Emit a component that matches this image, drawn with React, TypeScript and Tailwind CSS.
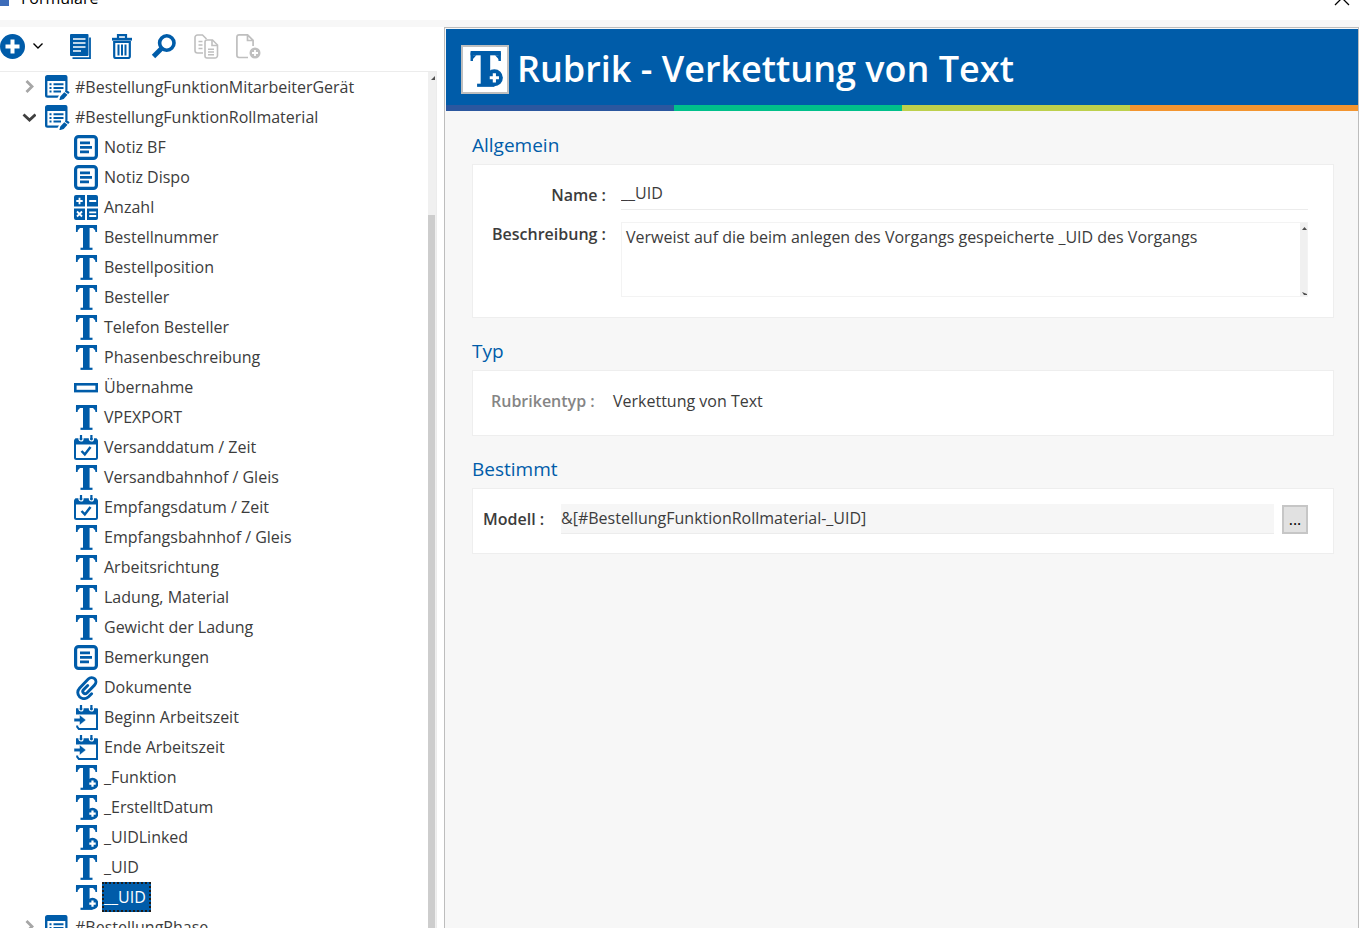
import React, { useState } from 'react';
import clsx from 'clsx';

type IconType = 'note' | 'calc' | 'text' | 'concat' | 'separator' | 'date' | 'file' | 'time';

interface Field {
  name: string;
  icon: IconType;
}

const fields: Field[] = [
  { name: 'Notiz BF', icon: 'note' },
  { name: 'Notiz Dispo', icon: 'note' },
  { name: 'Anzahl', icon: 'calc' },
  { name: 'Bestellnummer', icon: 'text' },
  { name: 'Bestellposition', icon: 'text' },
  { name: 'Besteller', icon: 'text' },
  { name: 'Telefon Besteller', icon: 'text' },
  { name: 'Phasenbeschreibung', icon: 'text' },
  { name: 'Übernahme', icon: 'separator' },
  { name: 'VPEXPORT', icon: 'text' },
  { name: 'Versanddatum / Zeit', icon: 'date' },
  { name: 'Versandbahnhof / Gleis', icon: 'text' },
  { name: 'Empfangsdatum / Zeit', icon: 'date' },
  { name: 'Empfangsbahnhof / Gleis', icon: 'text' },
  { name: 'Arbeitsrichtung', icon: 'text' },
  { name: 'Ladung, Material', icon: 'text' },
  { name: 'Gewicht der Ladung', icon: 'text' },
  { name: 'Bemerkungen', icon: 'note' },
  { name: 'Dokumente', icon: 'file' },
  { name: 'Beginn Arbeitszeit', icon: 'time' },
  { name: 'Ende Arbeitszeit', icon: 'time' },
  { name: '_Funktion', icon: 'concat' },
  { name: '_ErstelltDatum', icon: 'concat' },
  { name: '_UIDLinked', icon: 'concat' },
  { name: '_UID', icon: 'text' },
  { name: '__UID', icon: 'concat' },
];

const TextIcon = ({ plus = false, className = 'h-[25px] w-6' }: { plus?: boolean; className?: string }) => (
  <svg viewBox="0 0 24 25" fill="none" stroke="currentColor" className={className}>
    <path d="M2 1.5h21" strokeWidth="3" />
    <path d="M2.8 1v6M22.2 1v6" strokeWidth="1.7" />
    <path d="M3 3l3 0L3.200 6zM22 3l-3 0L21.800 6z" fill="currentColor" stroke="none" />
    <path d="M12.300 1v23" strokeWidth="6.600" />
    <path d="M6.500 23.800h12" strokeWidth="2.200" />
    {plus && (
      <>
        <circle cx="18.500" cy="18.600" r="5.900" fill="currentColor" stroke="none" />
        <path d="M18.500 15.400v6.400M15.300 18.600h6.400" stroke="white" strokeWidth="2.200" />
      </>
    )}
  </svg>
);

const CalendarTop = () => (
  <>
    <path d="M1 3.500h22v6H1z" fill="currentColor" />
    <path d="M5 0v4a2 2 0 0 0 4 0V0M15.400 0v4a2 2 0 0 0 4 0V0" stroke="white" strokeWidth="1.200" />
    <path d="M7 0v4.500M17.400 0v4.500" stroke="currentColor" strokeWidth="2.200" />
  </>
);

const FieldIcon = ({ type }: { type: IconType }) => {
  if (type === 'text') return <TextIcon />;
  if (type === 'concat') return <TextIcon plus />;
  return (
    <svg viewBox="0 0 24 25" fill="none" className="h-[25px] w-6">
      {type === 'note' && (
        <g stroke="currentColor">
          <rect x="1.600" y="1.600" width="20.800" height="21.800" rx="3" strokeWidth="3.200" />
          <path d="M6 7.900h10M6 12.400h12M6 16.900h9" strokeWidth="2.600" />
        </g>
      )}
      {type === 'calc' && (
        <>
          <path d="M2 0h9v11.500H0V2a2 2 0 0 1 2-2zM13 0h9a2 2 0 0 1 2 2v9.500H13zM0 13.500h11V25H2a2 2 0 0 1-2-2zM13 13.500h11V23a2 2 0 0 1-2 2h-9z" fill="currentColor" />
          <path d="M5.500 2.800v6.400M2.300 6h6.400M15.200 6h7M3 16.500l5 5M8 16.500l-5 5M15.200 17.300h7M15.200 21h7" stroke="white" strokeWidth="1.800" />
        </>
      )}
      {type === 'separator' && (
        <rect x="1.300" y="9.300" width="21.400" height="6.800" stroke="currentColor" strokeWidth="2.600" />
      )}
      {type === 'date' && (
        <>
          <rect x="1" y="4.500" width="22" height="19.400" rx="1.500" stroke="currentColor" strokeWidth="2" />
          <CalendarTop />
          <path d="M7.500 16l3.300 3.400 5.700-7.400" stroke="currentColor" strokeWidth="2.500" />
        </>
      )}
      {type === 'time' && (
        <>
          <path d="M3 9V4.500h20v19.400H4.800L3.200 22v-1.500" stroke="currentColor" strokeWidth="2" />
          <path d="M2 3.500h21v6H2z" fill="currentColor" />
          <path d="M5 0v4a2 2 0 0 0 4 0V0M15.400 0v4a2 2 0 0 0 4 0V0" stroke="white" strokeWidth="1.200" />
          <path d="M7 0v4.500M17.400 0v4.500" stroke="currentColor" strokeWidth="2.200" />
          <path d="M0 13.300h5.500V9.800l6.500 5.200-6.500 5.200v-3.500H0z" fill="currentColor" stroke="white" strokeWidth="0.500" />
        </>
      )}
      {type === 'file' && (
        <path
          d="M17.600 18.800l-3 2.900c-2.600 2.400-6.300 2.600-8.900.3-2.600-2.500-2.600-6.400 0-9.100l8.600-8.900c1.800-1.800 4.700-1.900 6.400-.2 1.700 1.800 1.600 4.500-.2 6.300l-7.600 7.800c-1 1-2.500 1-3.400.1-.9-.9-.9-2.300 0-3.300l4.200-4.200"
          stroke="currentColor"
          strokeWidth="2.900"
          strokeLinecap="round"
        />
      )}
    </svg>
  );
};

const FormIcon = () => (
  <svg viewBox="0 0 25 25" fill="none" className="h-[25px] w-[25px] text-[#005ca9]">
    <path d="M2.500 0h18a2 2 0 0 1 2 2v13l-2.200 2V6H2.400v14.500H14l-1.500 2.200H2.500A2.500 2.500 0 0 1 0 20.200V2.500A2.500 2.500 0 0 1 2.500 0z" fill="currentColor" />
    <path d="M8.500 9.300h10M8.500 12.900h10M8.500 16.500h7.500M4.500 9.300h2M4.500 12.900h2M4.500 16.500h2" stroke="currentColor" strokeWidth="2" />
    <path d="M21.300 14.800l3.400 2.400-1.500 1.900-3.200-2.400zM19.300 17.300l3.200 2.400-3.800 4.400-4.400 1.200 1-3.900z" fill="currentColor" />
  </svg>
);

const Chevron = ({ open }: { open?: boolean }) => (
  <svg viewBox="0 0 14 14" fill="none" className={clsx('h-3.5 w-3.5', open ? 'text-[#404040]' : 'text-[#a6a6a6]')}>
    <path d={open ? 'M1.500 4.500L7.500 10l6-5.500' : 'M4.500 1l5.500 5.500L4.500 12'} stroke="currentColor" strokeWidth="2.800" />
  </svg>
);

const FormRow = ({ name, open }: { name: string; open?: boolean }) => (
  <button type="button" aria-expanded={!!open} className="flex h-[30px] w-full items-center pl-[22px] text-left">
    <Chevron open={open} />
    <span className="ml-[9px]"><FormIcon /></span>
    <span className="ml-[5px] whitespace-nowrap">{name}</span>
  </button>
);

const Toolbar = () => (
  <div className="flex h-[45px] shrink-0 items-center border-b border-[#ececec] pb-1.5 text-[#005ca9]">
    <button type="button" aria-label="Neu" className="flex items-center gap-2">
      <svg viewBox="0 0 25 25" className="h-[25px] w-[25px]">
        <circle cx="12.500" cy="12.500" r="12.500" fill="currentColor" />
        <path d="M12.500 5.500v14M5.500 12.500h14" stroke="white" strokeWidth="4" />
      </svg>
      <svg viewBox="0 0 10 8" fill="none" className="h-2 w-2.5 text-black">
        <path d="M0.500 1.500L5 6l4.500-4.500" stroke="currentColor" strokeWidth="1.400" />
      </svg>
    </button>
    <button type="button" aria-label="Liste" className="ml-[26px]">
      <svg viewBox="0 0 22 25" fill="none" className="h-[25px] w-[22px]">
        <rect x="1" width="18.500" height="22" rx="1" fill="currentColor" />
        <path d="M4 5h12.500M4 9h12.500M4 13h12.500M4 17h8" stroke="white" strokeWidth="1.400" />
        <path d="M21 3.500v20.600H3.500" stroke="currentColor" strokeWidth="1.800" />
      </svg>
    </button>
    <button type="button" aria-label="Löschen" className="ml-5">
      <svg viewBox="0 0 22 25" fill="none" className="h-[25px] w-[22px]">
        <path d="M7 4V1.200h8V4" stroke="currentColor" strokeWidth="2.200" />
        <path d="M1 5.200h20" stroke="currentColor" strokeWidth="2.800" />
        <path d="M3.200 8h15.600v14.500a1.500 1.500 0 0 1-1.500 1.500H4.700a1.500 1.500 0 0 1-1.500-1.500z" stroke="currentColor" strokeWidth="2.200" />
        <path d="M7.500 10.500v11M11 10.500v11M14.500 10.500v11" stroke="currentColor" strokeWidth="2" />
      </svg>
    </button>
    <button type="button" aria-label="Suchen" className="ml-[18px]">
      <svg viewBox="0 0 25 25" fill="none" className="h-[25px] w-[25px]">
        <circle cx="15.800" cy="9" r="7.200" stroke="currentColor" strokeWidth="3.600" />
        <path d="M10.500 14.500l-8 8" stroke="currentColor" strokeWidth="4.800" />
      </svg>
    </button>
    <button type="button" disabled aria-label="Kopieren" className="ml-[18px] text-[#bfbfbf]">
      <svg viewBox="0 0 25 25" fill="none" stroke="currentColor" strokeWidth="1.600" className="h-[25px] w-[25px]">
        <path d="M9 19H3.500A2.500 2.500 0 0 1 1 16.500v-13A2.500 2.500 0 0 1 3.500 1h5l4 4" />
        <path d="M4.500 7.500h4M4.500 11h4M4.500 14.500h4" />
        <path d="M13 6h5.500l5 5v10.500a2.500 2.500 0 0 1-2.500 2.500h-8a2 2 0 0 1-2-2V8a2 2 0 0 1 2-2z" />
        <path d="M18 6v5.500h5.500M14 15.300h6M14 18h6M14 20.700h6" />
      </svg>
    </button>
    <button type="button" disabled aria-label="Einfügen" className="ml-[17px] text-[#bfbfbf]">
      <svg viewBox="0 0 25 25" fill="none" className="h-[25px] w-[25px]">
        <path d="M12 23.500H3A2.200 2.200 0 0 1 .9 21.300V3A2.200 2.200 0 0 1 3.100.9h8.500l5.500 5.500V12M11.500 1v5.500h5.500" stroke="currentColor" strokeWidth="1.700" />
        <circle cx="19" cy="19" r="5.500" fill="currentColor" />
        <path d="M19 16v6M16 19h6" stroke="white" strokeWidth="1.800" />
      </svg>
    </button>
  </div>
);

interface SectionProps {
  title: string;
  children: React.ReactNode;
}

const Section = ({ title, children }: SectionProps) => (
  <section>
    <h2 className="mb-1 text-[19px] leading-[30px] text-[#005ca9]">{title}</h2>
    <div className="border border-[#eeeeee] bg-white">{children}</div>
  </section>
);

export default function App() {
  const [selected, setSelected] = useState('__UID');

  return (
    <div className="flex h-screen flex-col overflow-hidden bg-white font-['Open_Sans',sans-serif] text-base text-[#3c3c3c]">
      <header className="-mt-6 flex h-11 shrink-0 items-center pr-2.5 text-black">
        <svg viewBox="0 0 9 16" className="h-4 w-[9px]">
          <rect width="9" height="16" fill="#3d6cb9" />
        </svg>
        <span className="ml-3">Formulare</span>
        <button type="button" aria-label="Schließen" className="ml-auto">
          <svg viewBox="0 0 16 16" fill="none" className="h-4 w-4">
            <path d="M1 1l14 14M15 1L1 15" stroke="currentColor" strokeWidth="1.300" />
          </svg>
        </button>
      </header>
      <div className="h-[7px] shrink-0 bg-[#f7f7f7]" />

      <div className="flex min-h-0 flex-1">
        <aside className="flex w-[437px] shrink-0 flex-col">
          <Toolbar />
          <div className="flex min-h-0 flex-1">
            <nav className="min-w-0 flex-1 overflow-hidden" aria-label="Formulare">
              <FormRow name="#BestellungFunktionMitarbeiterGerät" />
              <FormRow name="#BestellungFunktionRollmaterial" open />
              <ul>
                {fields.map(field => (
                  <li key={field.name}>
                    <button
                      type="button"
                      onClick={() => setSelected(field.name)}
                      className="flex h-[30px] items-center gap-1 pl-[74px] text-[#005ca9]"
                    >
                      <FieldIcon type={field.icon} />
                      <span
                        className={clsx(
                          'flex h-[30px] items-center whitespace-nowrap border-2 pr-[3px]',
                          selected === field.name
                            ? 'border-dotted border-[#1c1c1c] bg-[#005ca9] text-white'
                            : 'border-transparent text-[#3c3c3c]'
                        )}
                      >
                        {field.name}
                      </span>
                    </button>
                  </li>
                ))}
              </ul>
              <FormRow name="#BestellungPhase" />
            </nav>
            <div className="flex w-[9px] flex-col border-r border-[#ececec] bg-[#f0f0f0]">
              <svg viewBox="0 0 8 10" className="h-2.5 w-2">
                <path d="M3 8l4-4v4z" fill="#505050" />
              </svg>
              <div className="mt-[133px] mr-px flex-1 bg-[#cdcdcd]" />
            </div>
          </div>
        </aside>

        <main className="ml-[7px] mr-px flex min-w-0 flex-1 flex-col border border-b-0 border-[#bdbdbd] bg-[#f7f7f7]">
          <div className="mt-px ml-px bg-white">
            <div className="flex h-[76px] items-center gap-2 bg-[#005ca9] pt-1 pl-[15px]">
              <span className="flex h-[49px] w-12 items-center justify-center border-2 border-[#bfbfbf] bg-white text-[#005ca9]">
                <TextIcon plus className="h-9 w-9" />
              </span>
              <h1 className="text-4xl font-semibold text-white">Rubrik - Verkettung von Text</h1>
            </div>
            <div className="grid h-1.5 grid-cols-4">
              <span className="bg-[#2b579f]" />
              <span className="bg-[#00c08b]" />
              <span className="bg-[#bdd04c]" />
              <span className="bg-[#f39530]" />
            </div>
          </div>

          <div className="flex flex-col gap-[18px] pt-[19px] pr-6 pl-[27px]">
            <Section title="Allgemein">
              <div className="grid grid-cols-[133px_1fr] gap-x-[15px] gap-y-3 pt-[15px] pr-[25px] pb-5">
                <label htmlFor="name" className="self-center text-right font-semibold">Name :</label>
                <input
                  id="name"
                  defaultValue="__UID"
                  className="h-[30px] w-full border-b border-[#ececec] bg-white pb-1 outline-none"
                />
                <label htmlFor="description" className="text-right font-semibold">Beschreibung :</label>
                <div className="flex h-[75px] border border-[#f3f3f3]">
                  <textarea
                    id="description"
                    defaultValue="Verweist auf die beim anlegen des Vorgangs gespeicherte _UID des Vorgangs"
                    className="h-full min-w-0 flex-1 resize-none overflow-hidden bg-white px-1 py-0.5 outline-none"
                  />
                  <svg viewBox="0 0 8 73" className="h-full w-2">
                    <path d="M1 0h7v73H1z" fill="#f0f0f0" />
                    <path d="M3 7l2.500-3L8 7zM3 69l2 3h3v-1z" fill="#505050" />
                  </svg>
                </div>
              </div>
            </Section>

            <Section title="Typ">
              <div className="flex h-16 items-center pb-1 pl-[18px]">
                <span className="w-[122px] font-semibold text-[#858585]">Rubrikentyp :</span>
                <span>Verkettung von Text</span>
              </div>
            </Section>

            <Section title="Bestimmt">
              <div className="flex h-16 items-center pr-[25px] pb-1 pl-2.5">
                <label htmlFor="model" className="w-[78px] shrink-0 font-semibold">Modell :</label>
                <input
                  id="model"
                  defaultValue="&[#BestellungFunktionRollmaterial-_UID]"
                  className="h-[30px] min-w-0 flex-1 border-b border-[#ececec] bg-[#f6f6f6] pb-0.5 outline-none"
                />
                <button
                  type="button"
                  className="ml-2 flex h-[29px] w-[26px] items-center justify-center border-2 border-[#c6c6c6] bg-[#e1e1e1] text-black"
                >
                  ...
                </button>
              </div>
            </Section>
          </div>
        </main>
      </div>
    </div>
  );
}
